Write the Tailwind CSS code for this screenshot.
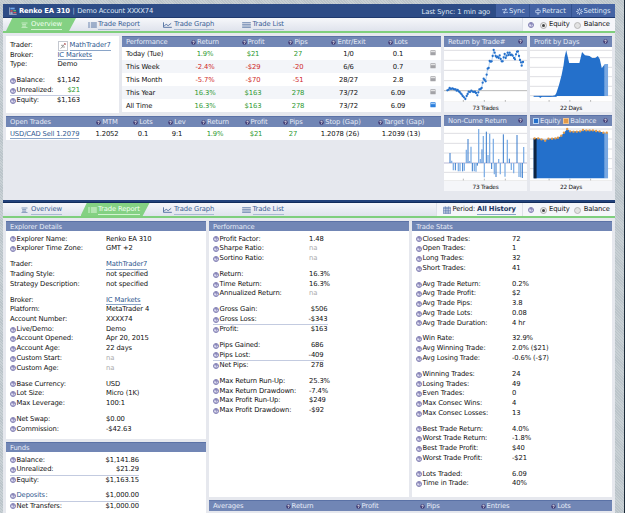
<!DOCTYPE html>
<html lang="en">
<head>
  <meta charset="UTF-8" />
  <meta name="viewport" content="width=device-width, initial-scale=1.0"/>
  <title>Renko EA 310 | Demo Account</title>
  <script src="https://cdn.jsdelivr.net/npm/@tailwindcss/browser@4"></script>
</head>
<body class="w-[625px] h-[513px] overflow-hidden bg-[#c2cacf] font-['DejaVu_Sans',Verdana,sans-serif] text-[6.8px] leading-[9.73px] tracking-[-0.13px] text-[#111]">
  <!-- icons -->
  <svg class="hidden">
    <symbol id="help" viewBox="0 0 12 12"><circle cx="6" cy="6" r="5" fill="#dddcf0" stroke="#6562a0" stroke-width="1.6"/><path d="M4 5Q4 3 6 3T8 5Q8 6 6 7M6 8.2V9.6" fill="none" stroke="#5a5698" stroke-width="1.6"/></symbol>
    <symbol id="help-light" viewBox="0 0 12 12"><circle cx="6" cy="6" r="5.4" fill="#403a72"/><path d="M4 5Q4 3 6 3T8 5Q8 6 6 7M6 8.2V9.8" fill="none" stroke="#fff" stroke-width="2"/></symbol>
    <symbol id="overview" viewBox="0 0 18 18"><path d="M0 3H18M2 8H14M2 12.500H14M0 17H18" stroke="currentColor" stroke-width="1.8"/></symbol>
    <symbol id="report" viewBox="0 0 26 18"><path d="M0 3H5M0 9H5M0 15H5M8 3H26M8 9H26M8 15H26" stroke="currentColor" stroke-width="2.6"/></symbol>
    <symbol id="graph" viewBox="0 0 26 18"><path d="M1 1V16H26M3 12L9 7L15 11L24 4" fill="none" stroke="currentColor" stroke-width="2.4"/></symbol>
    <symbol id="list" viewBox="0 0 26 18"><path d="M0 2H26M0 7H26M0 12H26M0 17H26" stroke="currentColor" stroke-width="2"/></symbol>
    <symbol id="calendar" viewBox="0 0 24 24"><path d="M1 4H23V23H1ZM1 8H23M1 13H23M1 18H23M7 1V23M12 4V23M17 1V23" fill="none" stroke="#4a6ba8" stroke-width="1.8"/></symbol>
  </svg>

  <div class="flex h-full pl-[3px] pt-[4px] border-r border-[#1b2a38] bg-[repeating-linear-gradient(45deg,#c8d0d4_0_1px,#bbc4ca_1px_2px)]">
    <div class="w-[612px] h-[509px] bg-[#e6e8ee] shrink-0 overflow-hidden">
      <!-- title bar -->
      <header class="flex h-[14px] bg-[#2d4c86] border-b border-[#1f3a6e] text-[#dfe7f5] leading-[14px]">
        <div class="flex flex-1 items-center pl-[6px] pt-px">
          <svg class="w-[8px] h-[8px] mr-[2px]" viewBox="0 0 24 24"><path d="M1 1V22H23" fill="none" stroke="#d5deea" stroke-width="2"/><path d="M4 2H17V7H4Z" fill="#6fa8ea"/><path d="M4 10H11V14H4ZM13 15H22V19H13Z" fill="#e0595c"/><path d="M13 9H21V13H13Z" fill="#4fbf70"/><path d="M4 18H11" stroke="#fff" stroke-width="3"/></svg>
          <b class="text-white">Renko EA 310</b><span class="mx-[2.500px] text-[#aebfdd]">|</span><span class="tracking-[-0.17px]">Demo Account XXXX74</span>
        </div>
        <span class="w-[78px] pt-px pl-[3.500px]">Last Sync: 1 min ago</span>
        <div class="flex w-[119px] bg-[#4463a4]">
          <span class="flex items-center w-[34px] pt-px pl-[6px] border-r border-[#33528f]"><svg class="w-[6px] h-[6px] mr-px" viewBox="0 0 18 18"><path d="M0 5H15M11 1V9M18 13H3M7 9V17" stroke="#c8d8f2" stroke-width="2.200"/></svg>Sync</span>
          <span class="flex items-center w-[42px] pt-px pl-[5px] border-r border-[#33528f]"><svg class="w-[6px] h-[7px] mr-px" viewBox="0 0 18 20"><path d="M9 0V7M9 13V20M2 7H16V13H2ZM5 3H13M5 17H13" fill="none" stroke="#c8d8f2" stroke-width="2"/></svg>Retract</span>
          <span class="flex items-center pt-px pl-[3.500px]"><svg class="w-[7px] h-[7px] mr-px" viewBox="0 0 20 20"><circle cx="10" cy="10" r="5" fill="none" stroke="#c8d8f2" stroke-width="2.500"/><path d="M10 0V4M10 16V20M0 10H4M16 10H20M3 3L6 6M14 14L17 17M17 3L14 6M6 14L3 17" stroke="#c8d8f2" stroke-width="2.200"/></svg>Settings</span>
        </div>
      </header>
      <nav id="overviewTabs"></nav>

      <!-- overview -->
      <section class="flex gap-[3px] h-[167px] pt-[3px] pl-[3px]">
        <div class="w-[435px]">
          <div class="flex gap-[3px]">
            <div class="w-[113px] h-[77px] bg-white pt-[5px] pl-[4px]">
              <div class="flex h-[9.730px]"><span class="w-[47.500px]">Trader:</span><svg class="w-[10px] h-[10px] mr-[2px] border border-[#c4c8d0]" viewBox="0 0 24 24"><path d="M5 20L18 5M6 10H13M10 15H18M15 3L20 8" stroke="#777" stroke-width="2"/><path d="M16 4H20V8H16Z" fill="#d66"/></svg><a class="h-[9.500px] text-[#31598f] border-b border-[#8aa5c8]">MathTrader7</a></div>
              <div class="flex h-[9.730px]"><span class="w-[47.500px]">Broker:</span><a class="h-[9.500px] text-[#31598f] border-b border-[#8aa5c8]">IC Markets</a></div>
              <div class="flex h-[9.730px]"><span class="w-[47.500px]">Type:</span>Demo</div>
              <div id="balances" class="pt-[6.200px]"></div>
            </div>
            <div id="performance" class="w-[319px]"></div>
          </div>
          <div id="openTrades" class="mt-[3px]"></div>
        </div>
        <div id="charts" class="grid grid-cols-[83px_82px] gap-[3px] content-start"></div>
      </section>

      <!-- report -->
      <div class="h-[3px] bg-[#23427a] border-b border-[#122c5b]"></div>
      <nav id="reportTabs"></nav>
      <section class="flex gap-[3px] pl-[3px] pt-[3px] h-[295px]">
        <div class="w-[200px]">
          <div class="h-[10px] leading-[10px] bg-[#7186b5] border-t border-[#5b72a6] text-[#e6ebf6] pl-[4px]">Explorer Details</div>
          <div id="details" class="h-[208px] bg-white pt-[3.600px] pl-[4px]"></div>
          <div class="h-[10px] mt-[3px] leading-[10px] bg-[#7186b5] border-t border-[#5b72a6] text-[#e6ebf6] pl-[4px]">Funds</div>
          <div id="funds" class="h-[70px] bg-white pt-[3.600px] pl-[4px]"></div>
        </div>
        <div class="w-[403px]">
          <div class="flex gap-[3px]">
            <div class="w-[200px]">
              <div class="h-[10px] leading-[10px] bg-[#7186b5] border-t border-[#5b72a6] text-[#e6ebf6] pl-[4px]">Performance</div>
              <div id="perfDetails" class="h-[266px] bg-white pt-[3.600px] pl-[4px]"></div>
            </div>
            <div class="w-[200px]">
              <div class="h-[10px] leading-[10px] bg-[#7186b5] border-t border-[#5b72a6] text-[#e6ebf6] pl-[4px]">Trade Stats</div>
              <div id="tradeStats" class="h-[266px] bg-white pt-[3.600px] pl-[4px]"></div>
            </div>
          </div>
          <div id="averages" class="mt-[3px]"></div>
        </div>
      </section>
    </div>
  </div>

  <script>
    const help = '<svg class="inline-block shrink-0 w-[6px] h-[6px] mr-[0.500px]"><use href="#help"/></svg>';
    const helpLight = '<svg class="inline-block shrink-0 w-[5px] h-[5px] mr-px"><use href="#help-light"/></svg>';
    const put = (id, html) => { document.getElementById(id).innerHTML = html; };

    // Tab bars
    function tabs(active, extra) {
      const items = [
        ['Overview', 'overview', 'ml-[3px] w-[70px] pl-[15px]', 'w-[7px] h-[6px] mr-[3px]'],
        ['Trade Report', 'report', 'ml-[4.500px] w-[69px] pl-[7.500px]', 'w-[9px] h-[6px] mr-px'],
        ['Trade Graph', 'graph', 'ml-[6px] w-[70px] pl-[7.500px]', 'w-[9px] h-[6px] mr-[2px]'],
        ['Trade List', 'list', 'ml-[9px] w-[60px] pl-[7.500px]', 'w-[9px] h-[6px] mr-[1.500px]']
      ];
      return `<div class="flex h-[15px] border-b-2 border-[#7fcf7d] bg-linear-to-b from-[#f6f7fa] to-[#dfe3ec]">
        ${items.map(([name, icon, box, size]) => `
          <div class="flex items-center shrink-0 pt-px ${box} ${name === active ? 'bg-[#84d183] text-[#f1fff0] [clip-path:polygon(9%_0,100%_0,90%_100%,0_100%)]' : 'text-[#3b5e94]'}">
            <svg class="${size}"><use href="#${icon}"/></svg><span class="h-[9.500px] leading-[9px] whitespace-nowrap border-b ${name === active ? 'border-[#d3f3d2]' : 'border-[#a9bad3]'}">${name}</span>
          </div>`).join('')}
        <div class="flex ml-auto">
          ${extra}
          <div class="flex items-center w-[93px] pt-px pl-[5px] bg-[#f5f6fa] border-l border-[#dde0e8]">
            ${help}<svg class="w-[7px] h-[7px] ml-[5px] mr-[2.500px]" viewBox="0 0 14 14"><circle cx="7" cy="7" r="6" fill="#eee" stroke="#999" stroke-width="1.500"/><circle cx="7" cy="7" r="3" fill="#444"/></svg>Equity
            <svg class="w-[7px] h-[7px] ml-[4.500px] mr-[2.500px]" viewBox="0 0 14 14"><circle cx="7" cy="7" r="6" fill="#e2e2e2" stroke="#aaa" stroke-width="1.500"/></svg>Balance
          </div>
        </div>
      </div>`;
    }
    put('overviewTabs', tabs('Overview', ''));
    put('reportTabs', tabs('Trade Report', '<div class="flex items-center w-[86px] pt-px pl-[6px] bg-[#f5f6fa] border-l border-[#dde0e8] whitespace-nowrap"><svg class="w-[8px] h-[8px] mr-[1.500px]"><use href="#calendar"/></svg>Period:<b class="ml-[2px] h-[9.500px] leading-[9px] text-[#1d3763] border-b border-[#8aa5c8]">All History</b></div>'));

    // Label / value rows; null is a blank gap
    // kinds: q = help icon, l = linked value, n = not available, r = right aligned, u = ruled, g = green, k = linked label
    function rows(list, labelWidth, valueWidth) {
      return list.map(row => {
        if (!row) return '<div class="h-[6.200px]"></div>';
        const [label, value, kind = '', width = valueWidth] = row;
        const has = k => kind.includes(k);
        return `<div class="flex whitespace-nowrap ${has('u') ? 'h-[10.200px] border-b border-[#c3cbe0]' : 'h-[9.730px]'}" style="width:${labelWidth + width}px">
          <span class="flex items-center" style="width:${labelWidth}px">${has('q') ? help : ''}${has('k') ? `<a class="mr-[0.500px] text-[#31598f]">${label}</a>:` : label + ':'}</span>
          <span class="${has('r') ? 'flex-1 text-right' : ''} ${has('n') ? 'text-[#aaa]' : ''} ${has('g') ? 'text-[#2f9a33]' : ''} ${has('l') ? 'h-[9.500px] text-[#31598f] border-b border-[#8aa5c8]' : ''}">${value}</span>
        </div>`;
      }).join('');
    }

    put('balances', rows([['Balance', '$1,142', 'qr'], ['Unrealized', '$21', 'qrug'], ['Equity', '$1,163', 'qr']], 47.5, 22.5));
    put('details', rows([
      ['Explorer Name', 'Renko EA 310', 'q'], ['Explorer Time Zone', 'GMT +2', 'q'], null,
      ['Trader', 'MathTrader7', 'l'], ['Trading Style', 'not specified'], ['Strategy Description', 'not specified'], null,
      ['Broker', 'IC Markets', 'l'], ['Platform', 'MetaTrader 4'], ['Account Number', 'XXXX74'], ['Live/Demo', 'Demo', 'q'],
      ['Account Opened', 'Apr 20, 2015', 'q'], ['Account Age', '22 days', 'q'], ['Custom Start', 'na', 'qn'], ['Custom Age', 'na', 'qn'], null,
      ['Base Currency', 'USD', 'q'], ['Lot Size', 'Micro (1K)', 'q'], ['Max Leverage', '100:1', 'q'], null,
      ['Net Swap', '$0.00', 'q'], ['Commission', '-$42.63', 'q']
    ], 96, 90));
    put('funds', rows([
      ['Balance', '$1,141.86', 'qr'], ['Unrealized', '$21.29', 'qru'], ['Equity', '$1,163.15', 'qr'], null,
      ['Deposits', '$1,000.00', 'qruk'], ['Net Transfers', '$1,000.00', 'qr']
    ], 95, 34));
    put('perfDetails', rows([
      ['Profit Factor', '1.48', 'q'], ['Sharpe Ratio', 'na', 'qn'], ['Sortino Ratio', 'na', 'qn'], null,
      ['Return', '16.3%', 'q'], ['Time Return', '16.3%', 'q'], ['Annualized Return', 'na', 'qn'], null,
      ['Gross Gain', '$506', 'qr', 18.5], ['Gross Loss', '-$343', 'qru', 18.5], ['Profit', '$163', 'qr', 18.5], null,
      ['Pips Gained', '686', 'qr', 14.5], ['Pips Lost', '-409', 'qru', 14.5], ['Net Pips', '278', 'qr', 14.5], null,
      ['Max Return Run-Up', '25.3%', 'q'], ['Max Return Drawdown', '-7.4%', 'q'], ['Max Profit Run-Up', '$249', 'q'], ['Max Profit Drawdown', '-$92', 'q']
    ], 96, 90));
    put('tradeStats', rows([
      ['Closed Trades', '72', 'q'], ['Open Trades', '1', 'q'], ['Long Trades', '32', 'q'], ['Short Trades', '41', 'q'], null,
      ['Avg Trade Return', '0.2%', 'q'], ['Avg Trade Profit', '$2', 'q'], ['Avg Trade Pips', '3.8', 'q'], ['Avg Trade Lots', '0.08', 'q'], ['Avg Trade Duration', '4 hr', 'q'], null,
      ['Win Rate', '32.9%', 'q'], ['Avg Winning Trade', '2.0% ($21)', 'q'], ['Avg Losing Trade', '-0.6% (-$7)', 'q'], null,
      ['Winning Trades', '24', 'q'], ['Losing Trades', '49', 'q'], ['Even Trades', '0', 'q'], ['Max Consec Wins', '4', 'q'], ['Max Consec Losses', '13', 'q'], null,
      ['Best Trade Return', '4.0%', 'q'], ['Worst Trade Return', '-1.8%', 'q'], ['Best Trade Profit', '$40', 'q'], ['Worst Trade Profit', '-$21', 'q'], null,
      ['Lots Traded', '6.09', 'q'], ['Time in Trade', '40%', 'q']
    ], 96, 90));

    // Tables
    function tableHead(cols, names) {
      return `<div class="grid ${cols} h-[10.500px] leading-[10px] bg-[#7186b5] border-t border-[#5b72a6] text-[#e6ebf6] text-center whitespace-nowrap">
        <span class="pl-[4px] text-left">${names[0]}</span>${names.slice(1).map(n => `<span class="flex items-center justify-center">${helpLight}${n}</span>`).join('')}</div>`;
    }
    const perfCols = 'grid-cols-[59px_48px_48px_42px_59px_40px_23px]';
    const perf = [
      ['Today (Tue)', '1.9%', '$21', '27', '1/0', '0.1'],
      ['This Week', '-2.4%', '-$29', '-20', '6/6', '0.7'],
      ['This Month', '-5.7%', '-$70', '-51', '28/27', '2.8'],
      ['This Year', '16.3%', '$163', '278', '73/72', '6.09'],
      ['All Time', '16.3%', '$163', '278', '73/72', '6.09']
    ];
    put('performance', tableHead(perfCols, ['Performance', 'Return', 'Profit', 'Pips', 'Entr/Exit', 'Lots']) + perf.map((r, i) => `
      <div class="grid ${perfCols} h-[13.100px] leading-[14px] text-center ${i % 2 ? 'bg-[#f3f5f9]' : 'bg-white'}">
        <span class="pl-[4px] text-left">${r[0]}</span>
        ${r.slice(1).map((v, c) => `<span class="${c > 2 ? '' : r[1][0] === '-' ? 'text-[#cf2a2a]' : 'text-[#2f9a33]'}">${v}</span>`).join('')}
        <svg class="w-[6px] h-[6px] ml-[12px] mt-[3px]" viewBox="0 0 18 18"><rect x="1" y="1" width="16" height="15" rx="2" fill="${i === 4 ? '#2d7fdc' : '#a2a2a6'}"/><path d="M2 5H16" stroke="${i === 4 ? '#b5d8fb' : '#eee'}" stroke-width="3"/></svg>
      </div>`).join(''));

    const openCols = 'grid-cols-[84px_34px_38px_30px_46px_36px_38px_56px_66px]';
    put('openTrades', tableHead(openCols, ['Open Trades', 'MTM', 'Lots', 'Lev', 'Return', 'Profit', 'Pips', 'Stop (Gap)', 'Target (Gap)']) +
      `<div class="grid ${openCols} h-[13px] leading-[14px] bg-white text-center whitespace-nowrap">
        <a class="ml-[4px] mt-[2px] h-[10px] leading-[10px] justify-self-start text-[#31598f] border-b border-[#8aa5c8]">USD/CAD Sell 1.2079</a>
        <span>1.2052</span><span>0.1</span><span>9:1</span><span class="text-[#2f9a33]">1.9%</span><span class="text-[#2f9a33]">$21</span><span class="text-[#2f9a33]">27</span><span>1.2078 (26)</span><span>1.2039 (13)</span>
      </div>`);
    put('averages', tableHead('grid-cols-[57px_67px_68px_58px_72px_60px]', ['Averages', 'Return', 'Profit', 'Pips', 'Entries', 'Lots']));

    // Charts
    function grid(ys, ticks, tickY) {
      return ys.map(y => `<path d="M87 ${y}H336" stroke="#dedee2" stroke-width="3"/>`).join('') +
        ticks.map(x => `<path d="M${x} ${tickY}v6" stroke="#aaa" stroke-width="2.500"/>`).join('') + `<path d="M87 ${tickY + 6}H336" stroke="#ddd" stroke-width="2"/>`;
    }
    const trades = [[97,271],[101,269],[104,264],[108,267],[112,265],[115,267],[119,268],[122,268],[125,272],[128,270],[131,274],[134,276],[137,280],[140,283],[143,288],[147,292],[151,297],[155,288],[158,282],[161,275],[165,276],[169,272],[173,275],[177,276],[180,275],[183,279],[187,286],[190,277],[193,268],[197,267],[200,264],[203,248],[206,236],[209,240],[212,244],[215,224],[218,206],[221,204],[224,183],[227,185],[230,184],[233,168],[236,150],[239,158],[242,168],[245,172],[248,170],[251,174],[254,166],[257,177],[260,184],[263,184],[266,172],[269,162],[272,174],[275,167],[278,158],[281,165],[284,158],[287,165],[290,164],[293,167],[297,174],[300,178],[303,163],[306,155],[309,154],[312,168],[315,180],[318,187],[320,197],[324,186]];
    const bars = [[105,130],[110,153],[115,182],[121,182],[130,185],[135,185],[143,185],[148,183],[154,120],[159,88],[164,154],[168,111],[172,185],[178,185],[183,186],[187,168],[191,58],[196,148],[201,119],[205,79],[208,203],[214,66],[219,136],[224,72],[230,178],[235,87],[238,194],[243,202],[251,148],[256,194],[265,74],[270,201],[277,90],[283,147],[289,181],[296,191],[306,76],[312,202],[317,203],[322,205],[326,112]];
    const balance = [[358,86],[369,86],[379,89],[390,93],[400,87],[411,87],[421,86],[429,84],[439,78],[447,69],[457,58],[466,65],[476,66],[486,66],[496,65],[505,61],[515,62],[525,62],[535,62],[545,64],[555,65],[567,69],[577,69]];
    const chart = (title, box, foot, body) => `
      <div class="h-[76px] bg-white">
        <div class="flex justify-between items-center h-[10.500px] pl-[4px] pr-[3px] bg-[#7186b5] border-t border-[#5b72a6] text-[#e6ebf6] whitespace-nowrap leading-[10px]"><span class="flex items-center">${title}</span>${helpLight}</div>
        <svg class="block w-full h-[55px]" viewBox="${box}" preserveAspectRatio="none">${body}</svg>
        <div class="h-[10.500px] leading-[12px] text-[5.800px] tracking-[-0.250px] bg-[#f5f6f9] text-center">${foot}</div>
      </div>`;
    put('charts',
      chart('Return by Trade#', '87 141 249 165', '73 Trades', grid([151, 181, 211, 242], [145, 208, 271], 300) +
        '<path d="M87 272H336" stroke="#aaa" stroke-width="2.500"/>' +
        `<polyline points="${trades.join(' ')}" fill="none" stroke="#8db9ea" stroke-width="2"/>` +
        trades.map(([x, y]) => `<circle cx="${x}" cy="${y}" r="3.400" fill="#2470cb"/>`).join('')) +
      chart('Profit by Days', '344 141 249 165', '22 Days', '<g transform="translate(257)">' + grid([151, 173, 202, 230, 259, 287], [145, 208, 271], 300) + '</g>' +
        '<path d="M355 288L369 288L375 294L382 289L405 290L420 286L424 279L432 255L440 225L446 195L449 172L454 151L459 172L463 189H494L502 156L511 166L525 168L533 174H542L550 168L556 178L562 205L571 192V288Z" fill="#2470cb"/><path d="M355 289H425" stroke="#2470cb" stroke-width="3"/><path d="M571 192H581V288H571Z" fill="#79a8e2"/>') +
      chart('Non-Cume Return', '87 49 249 165', '73 Trades', grid([71, 101, 130, 188], [145, 208, 271], 207) +
        '<path d="M87 160H336" stroke="#aac" stroke-width="2.500"/>' +
        bars.map(([x, y], i) => `<path d="M${x} 160V${y}" stroke="${i % 3 ? '#83b1e6' : '#3479cb'}" stroke-width="${i % 3 ? 4 : 3}"/>`).join('')) +
      chart('<i class="w-[6px] h-[6px] -ml-px mr-px bg-[#2470cb] border border-[#b9d3f2]"></i>Equity<i class="w-[6px] h-[6px] ml-[2.500px] mr-px bg-[#e39a48] border border-[#f1c490]"></i>Balance', '344 49 249 165', '22 Days', '<g transform="translate(257)">' + grid([58, 88, 118, 147, 177], [145, 208, 271], 207) + '</g>' +
        '<path d="M355 86H369L390 91L400 87L429 84L439 78L447 69L457 58L466 65L496 65L505 61L545 63L571 69V206H355Z" fill="#2470cb"/><path d="M355 86H364V206H355Z" fill="#0e2440"/><path d="M571 69H581V206H571Z" fill="#79a8e2"/>' +
        balance.map(([x, y]) => `<circle cx="${x}" cy="${y}" r="3.600" fill="#e39a48"/>`).join('')));
  </script>
</body>
</html>
